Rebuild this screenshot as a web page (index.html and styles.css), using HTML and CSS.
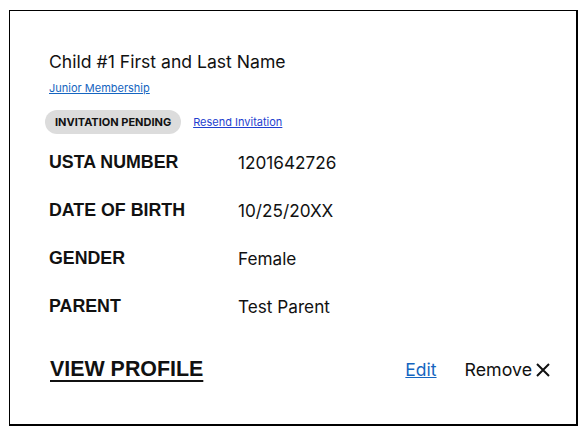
FILE: index.html
```html
<!DOCTYPE html>
<html>
<head>
<meta charset="utf-8">
<link rel="stylesheet" href="styles.css">
</head>
<body>
<div class="card">
  <div class="name">Child #1 First and Last Name</div>
  <a class="membership" href="#">Junior Membership</a>
  <div class="status">
    <span class="pill">INVITATION PENDING</span>
    <a class="resend" href="#">Resend Invitation</a>
  </div>
  <div class="details">
    <div class="row"><div class="label">USTA NUMBER</div><div class="value">1201642726</div></div>
    <div class="row"><div class="label">DATE OF BIRTH</div><div class="value">10/25/20XX</div></div>
    <div class="row"><div class="label">GENDER</div><div class="value">Female</div></div>
    <div class="row"><div class="label">PARENT</div><div class="value">Test Parent</div></div>
  </div>
  <div class="actions">
    <a class="view" href="#">VIEW PROFILE</a>
    <div class="right">
      <a class="edit" href="#">Edit</a>
      <span class="remove">Remove
        <svg class="x" width="14" height="14" viewBox="0 0 14 14"><path d="M1 1L13 13M13 1L1 13" stroke="#111" stroke-width="2" fill="none"/></svg>
      </span>
    </div>
  </div>
</div>
</body>
</html>
```
FILE: styles.css
```css
html, body { margin: 0; padding: 0; background: #fff; }
body { padding: 10px 0 0 9px; font-family: Inter, "Noto Sans", sans-serif; color: #111; }
.card {
  width: 569px;
  height: 416px;
  box-sizing: border-box;
  border: 1px solid #000;
  border-right-width: 2px;
  border-bottom-width: 2px;
  padding: 40px 25px 0 39px;
}
.name { font-size: 17.6px; line-height: 22px; }
.membership {
  display: inline-block;
  margin-top: 8px;
  font-size: 11px;
  line-height: 14px;
  color: #1565c0;
}
.status { display: flex; align-items: center; margin-top: 14px; margin-left: -4px; }
.pill {
  background: #dcdcdc;
  border-radius: 12px;
  font-weight: 700;
  font-size: 11px;
  height: 24px;
  line-height: 24px;
  padding: 0 10px;
}
.resend { margin-left: 12px; font-size: 11px; color: #1f3fcf; }
.details { margin-top: 17px; display: flex; flex-direction: column; gap: 26px; }
.row { display: flex; height: 22px; align-items: center; }
.label { width: 189px; font-family: "Liberation Sans", Arial, sans-serif; font-weight: 700; font-size: 17.8px; }
.value { font-size: 17.2px; }
.actions { display: flex; justify-content: space-between; align-items: center; margin-top: 40px; padding-right: 1px; }
.view { margin-left: 1px; font-family: "Liberation Sans", Arial, sans-serif; font-weight: 700; font-size: 21.4px; color: #111; text-decoration-thickness: 2px; text-underline-offset: 4px; }
.right { display: flex; align-items: center; }
.edit { font-size: 17.5px; color: #1565c0; }
.remove { margin-left: 28px; font-size: 17.8px; display: flex; align-items: center; gap: 4px; }
```
